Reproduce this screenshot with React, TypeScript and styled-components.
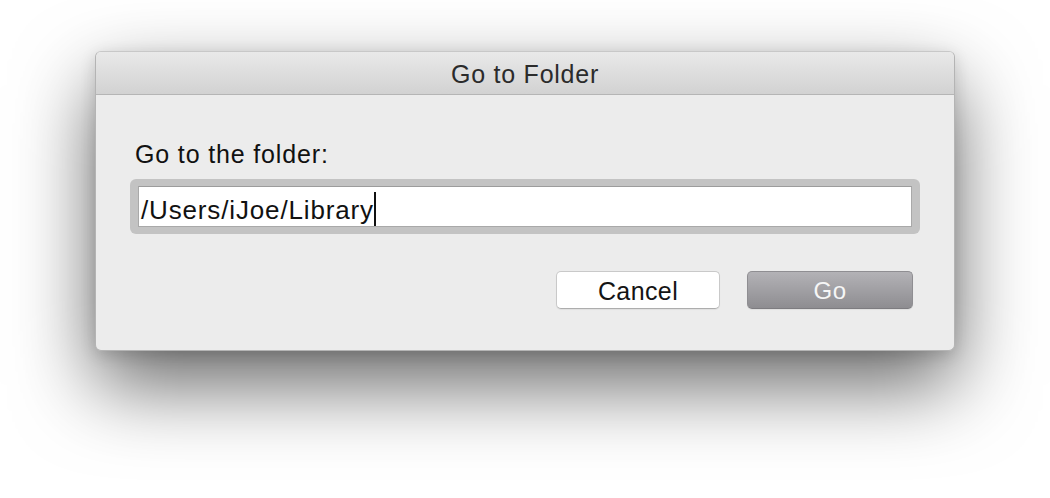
import React from "react";
import styled, { createGlobalStyle } from "styled-components";

const Global = createGlobalStyle`
  html, body { margin: 0; padding: 0; background: #ffffff; }
  body { font-family: "Liberation Sans", Arial, sans-serif; }
`;

const Page = styled.div`
  width: 1050px;
  height: 498px;
  padding: 51px 0 0 95px;
  box-sizing: border-box;
  overflow: hidden;
`;

const Window = styled.div`
  width: 860px;
  height: 300px;
  box-sizing: border-box;
  border-radius: 6px;
  background: #ececec;
  border: 1px solid #b4b4b4;
  border-top-color: #c8c8c8;
  box-shadow: 0 34px 80px rgba(0, 0, 0, 0.6), 0 4px 16px rgba(0, 0, 0, 0.14);
  display: flex;
  flex-direction: column;
  overflow: hidden;
`;

const TitleBar = styled.div`
  height: 43px;
  flex: none;
  display: flex;
  align-items: center;
  justify-content: center;
  padding-top: 2px;
  box-sizing: border-box;
  background: linear-gradient(#e9e9e9, #d2d2d2);
  border-bottom: 1px solid #b5b5b5;
  color: #2b2b2b;
  font-size: 25px;
  letter-spacing: 0.75px;
`;

const Body = styled.div`
  display: flex;
  flex-direction: column;
  padding: 0 34px;
`;

const Label = styled.div`
  margin: 45px 0 0 5px;
  height: 28px;
  line-height: 28px;
  font-size: 25px;
  letter-spacing: 0.85px;
  color: #111;
`;

const FocusRing = styled.div`
  margin-top: 11px;
  padding: 7px 8px;
  border-radius: 6px;
  background: #c3c3c3;
`;

const Field = styled.div`
  height: 41px;
  box-sizing: border-box;
  background: #ffffff;
  border: 1px solid #a9a9a9;
  border-top-color: #9c9c9c;
  display: flex;
  align-items: center;
  padding: 7px 0 0 2px;
  font-size: 26px;
  letter-spacing: 0.85px;
  color: #111;
`;

const Caret = styled.span`
  display: inline-block;
  width: 2px;
  height: 34px;
  margin-top: -3px;
  background: #111;
`;

const Buttons = styled.div`
  display: flex;
  justify-content: flex-end;
  gap: 27px;
  margin-top: 37px;
  padding-right: 7px;
`;

const Button = styled.div<{ $primary?: boolean }>`
  width: ${(p) => (p.$primary ? "166px" : "164px")};
  height: 38px;
  box-sizing: border-box;
  border-radius: 5px;
  display: flex;
  align-items: center;
  justify-content: center;
  padding-top: 2px;
  font-size: ${(p) => (p.$primary ? "24px" : "25px")};
  letter-spacing: ${(p) => (p.$primary ? "0.5px" : "0.4px")};
  color: ${(p) => (p.$primary ? "#f6f6f6" : "#141414")};
  background: ${(p) =>
    p.$primary ? "linear-gradient(#b3b2b6, #8e8d91)" : "#ffffff"};
  border: 1px solid ${(p) => (p.$primary ? "#8f8e92" : "#c9c9c9")};
  border-bottom-color: ${(p) => (p.$primary ? "#7d7c80" : "#adadad")};
  box-shadow: 0 1px 1px rgba(0, 0, 0, 0.06);
`;

export default function App() {
  return (
    <>
      <Global />
      <Page>
        <Window>
          <TitleBar>Go to Folder</TitleBar>
          <Body>
            <Label>Go to the folder:</Label>
            <FocusRing>
              <Field>
                /Users/iJoe/Library
                <Caret />
              </Field>
            </FocusRing>
            <Buttons>
              <Button>Cancel</Button>
              <Button $primary>Go</Button>
            </Buttons>
          </Body>
        </Window>
      </Page>
    </>
  );
}
